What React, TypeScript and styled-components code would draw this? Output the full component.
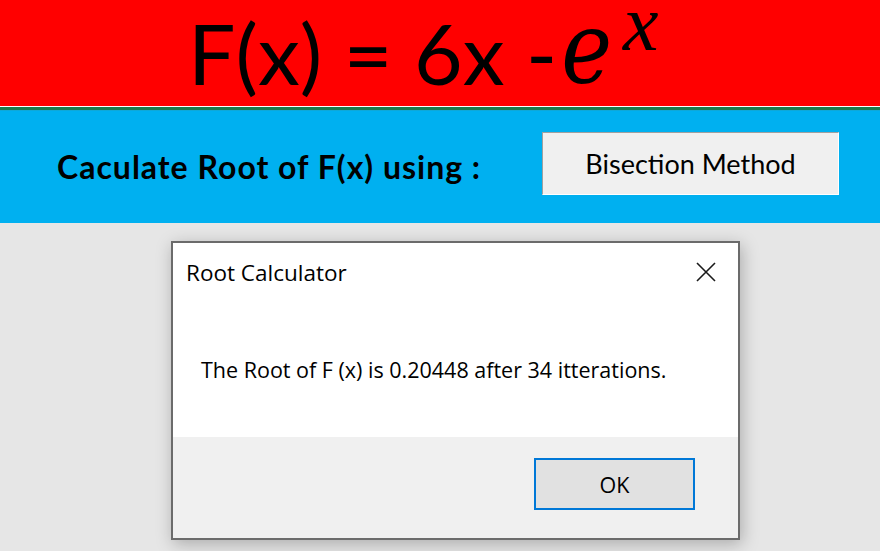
import React from 'react';
import styled, { createGlobalStyle } from 'styled-components';

const GlobalStyle = createGlobalStyle`
  html, body {
    margin: 0;
    padding: 0;
    width: 880px;
    height: 551px;
    overflow: hidden;
    background: #e6e6e6;
  }
  * {
    box-sizing: border-box;
  }
`;

const App = () => {
  return (
    <Page>
      <GlobalStyle />
      {/* 함수 제목 */}
      <FormulaBanner>
        <Formula>F(x) = 6x -</Formula>
        <MathE>e</MathE>
        <MathSup>x</MathSup>
      </FormulaBanner>
      <Divider />

      {/* 계산 방법 선택 */}
      <MethodBar>
        <MethodLabel>Caculate Root of F(x) using :</MethodLabel>
        <MethodButton>Bisection Method</MethodButton>
      </MethodBar>

      {/* 결과 메시지 박스 */}
      <Workspace>
        <Dialog>
          <DialogHeader>
            <DialogTitle>Root Calculator</DialogTitle>
            <CloseButton aria-label="Close">
              <svg width="20" height="20" viewBox="0 0 20 20">
                <path d="M1 1 L19 19 M19 1 L1 19" stroke="#1a1a1a" strokeWidth="1.6" fill="none" />
              </svg>
            </CloseButton>
          </DialogHeader>
          <DialogBody>The Root of F (x) is 0.20448 after 34 itterations.</DialogBody>
          <DialogFooter>
            <OkButton>OK</OkButton>
          </DialogFooter>
        </Dialog>
      </Workspace>
    </Page>
  );
};

export default App;

const Page = styled.div`
  width: 880px;
  height: 551px;
  display: flex;
  flex-direction: column;
  background: #e6e6e6;
  overflow: hidden;
`;

const FormulaBanner = styled.div`
  height: 106px;
  background: #ff0000;
  display: flex;
  align-items: flex-start;
  padding-left: 188px;
  color: #000;
`;

const Formula = styled.span`
  font-family: 'Lato', 'Open Sans', sans-serif;
  font-size: 84px;
  line-height: 106px;
  white-space: pre;
`;

const MathE = styled.span`
  display: inline-block;
  font-family: 'DejaVu Serif', 'Liberation Serif', serif;
  font-style: italic;
  font-size: 86px;
  line-height: 106px;
  margin-left: 4px;
  transform: scaleY(1.18);
  transform-origin: 50% 80%;
`;

const MathSup = styled.span`
  font-family: 'Liberation Serif', 'DejaVu Serif', serif;
  font-style: italic;
  font-size: 80px;
  line-height: 46px;
  margin-left: 11px;
`;

const Divider = styled.div`
  height: 5px;
  border-top: 1px solid #ffffff;
  border-bottom: 1px solid #0fa8d8;
  background: #1d7a4e;
`;

const MethodBar = styled.div`
  height: 112px;
  background: #00b0f0;
  display: flex;
  align-items: flex-start;
  padding: 21px 41px 0 57px;
`;

const MethodLabel = styled.div`
  font-family: 'Lato', 'Open Sans', sans-serif;
  font-weight: bold;
  font-size: 32px;
  letter-spacing: 1px;
  color: #000;
  line-height: 63px;
  margin-top: 3px;
`;

const MethodButton = styled.button`
  margin-left: auto;
  width: 297px;
  height: 63px;
  background: #f0f0f0;
  border: 1px solid;
  border-color: #a0a0a0 #ffffff #ffffff #a0a0a0;
  font-family: 'Lato', 'Open Sans', sans-serif;
  font-size: 27px;
  color: #000;
  padding: 0;
`;

const Workspace = styled.div`
  flex: 1;
  background: #e6e6e6;
  padding: 18px 0 0 171px;
`;

const Dialog = styled.div`
  width: 569px;
  height: 299px;
  border: 2px solid #6b6b6b;
  background: #ffffff;
  display: flex;
  flex-direction: column;
  box-shadow: 2px 4px 16px rgba(0, 0, 0, 0.26);
  font-family: 'Open Sans', 'Noto Sans', sans-serif;
  color: #000;
`;

const DialogHeader = styled.div`
  height: 58px;
  display: flex;
  align-items: center;
  justify-content: space-between;
  padding: 0 22px 0 13px;
`;

const DialogTitle = styled.div`
  font-size: 22.5px;
`;

const CloseButton = styled.div`
  width: 20px;
  height: 20px;
  display: flex;
`;

const DialogBody = styled.div`
  flex: 1;
  display: flex;
  align-items: center;
  padding: 0 0 0 28px;
  font-size: 21.5px;
`;

const DialogFooter = styled.div`
  height: 101px;
  background: #f0f0f0;
  display: flex;
  align-items: flex-start;
  justify-content: flex-end;
  padding: 21px 43px 0 0;
`;

const OkButton = styled.button`
  width: 161px;
  height: 52px;
  background: #e1e1e1;
  border: 2px solid #0078d7;
  font-family: 'Open Sans', 'Noto Sans', sans-serif;
  font-size: 21.5px;
  color: #000;
  padding: 0;
`;
